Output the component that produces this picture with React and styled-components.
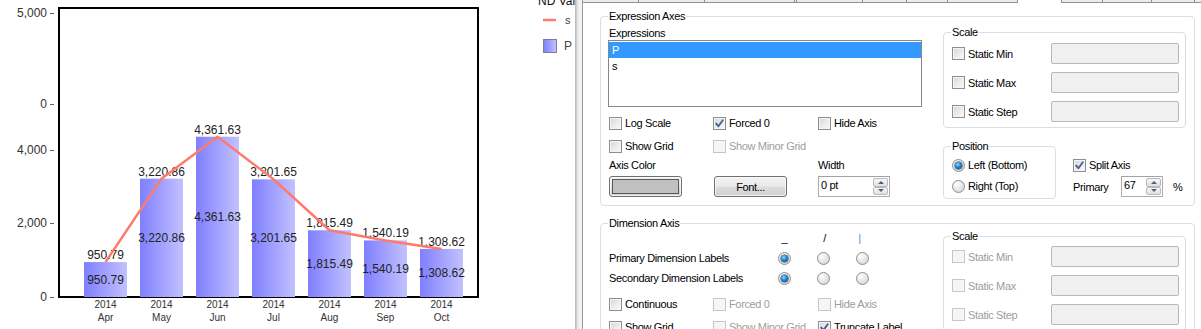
import React from 'react';
import styled, { createGlobalStyle } from 'styled-components';

const Global = createGlobalStyle`
  html, body { margin: 0; padding: 0; background: #fff; }
  body {
    width: 1201px; height: 329px; overflow: hidden;
    font-family: "Liberation Sans", Arial, sans-serif;
  }
`;

const Screen = styled.div`
  display: flex;
  width: 1201px;
  height: 329px;
  overflow: hidden;
  background: #fff;
`;

/* ---------------- Chart ---------------- */
const ChartPanel = styled.div`
  width: 575px;
  height: 329px;
  flex: none;
  overflow: hidden;
  background: #fff;
`;

const ChartSvg = styled.svg`
  display: block;
  font-family: "Liberation Sans", Arial, sans-serif;
`;

const DATA = [
  ['Apr', 950.79, '950.79'],
  ['May', 3220.86, '3,220.86'],
  ['Jun', 4361.63, '4,361.63'],
  ['Jul', 3201.65, '3,201.65'],
  ['Aug', 1815.49, '1,815.49'],
  ['Sep', 1540.19, '1,540.19'],
  ['Oct', 1308.62, '1,308.62'],
];

const BASE = 297;
const K = 147 / 4000;
const LINE = '#ff7a6a';

const YLABELS = [
  ['5,000', 13],
  ['0', 104],
  ['4,000', 150],
  ['2,000', 223],
  ['0', 297],
];

function Chart() {
  const pts = DATA.map(([, v], i) => [84 + 56 * i + 21.5, BASE - v * K]);
  return (
    <ChartSvg width="575" height="329" viewBox="0 0 575 329">
      <defs>
        <linearGradient id="barg" x1="0" y1="0" x2="1" y2="0">
          <stop offset="0" stopColor="#7f7fff" />
          <stop offset="1" stopColor="#c2c2ff" />
        </linearGradient>
      </defs>
      {YLABELS.map(([t, y], i) => (
        <g key={i}>
          <text x="47" y={y + 4} fontSize="12" fill="#333" textAnchor="end">{t}</text>
          <line x1="50" x2="54" y1={y + 0.5} y2={y + 0.5} stroke="#666" strokeWidth="1" />
        </g>
      ))}
      <rect x="59" y="8" width="419" height="289" fill="none" stroke="#000" strokeWidth="2" />
      {DATA.map(([m, v, t], i) => {
        const x = 84 + 56 * i;
        const h = v * K;
        const top = BASE - h;
        const cx = x + 21.5;
        return (
          <g key={m}>
            <rect x={x} y={top} width="43" height={h} fill="url(#barg)" />
            <text x={cx} y={top - 3} fontSize="12" fill="#222" textAnchor="middle">{t}</text>
            <text x={cx} y={top + h / 2 + 4} fontSize="12" fill="#222" textAnchor="middle">{t}</text>
            <text x={cx} y="308" fontSize="10" fill="#333" textAnchor="middle">2014</text>
            <text x={cx} y="321" fontSize="10" fill="#333" textAnchor="middle">{m}</text>
          </g>
        );
      })}
      <polyline
        points={pts.map((p) => p.join(',')).join(' ')}
        fill="none"
        stroke={LINE}
        strokeWidth="2.5"
        strokeLinejoin="round"
      />
      <text x="538" y="5" fontSize="12" fill="#111">ND Value</text>
      <line x1="543" x2="556" y1="20" y2="20" stroke={LINE} strokeWidth="2.5" />
      <text x="565" y="24" fontSize="11" fill="#444">s</text>
      <rect x="543.5" y="39.5" width="13" height="13" fill="url(#barg)" stroke="#7c7c9c" />
      <text x="564" y="50" fontSize="12" fill="#444">P</text>
    </ChartSvg>
  );
}

/* ---------------- Dialog ---------------- */
const WindowEdge = styled.div`
  width: 7px;
  flex: none;
  background: linear-gradient(
    to right,
    #b4b4b4 0px,
    #d8d8d8 2px,
    #eeeeee 3px,
    #f3f3f3 6px,
    #f3f3f3 7px
  );
`;

const Dialog = styled.div`
  flex: 1;
  min-width: 0;
  display: flex;
  flex-direction: column;
  background: #fff;
  border-left: 1px solid #9a9a9a;
  font-family: "Liberation Sans", Arial, sans-serif;
  font-size: 11px;
  letter-spacing: -0.35px;
  color: #000;
`;

const TabStrip = styled.div`
  display: flex;
  height: 3px;
  flex: none;
`;

const TabStub = styled.div`
  box-sizing: border-box;
  width: ${(p) => (p.$fill ? 'auto' : `${p.$w}px`)};
  flex: ${(p) => (p.$fill ? '1' : 'none')};
  height: 3px;
  background: ${(p) => (p.$sel ? '#fff' : '#ececec')};
  border-right: ${(p) => (p.$fill ? '0' : '1px solid #8e9196')};
  border-bottom: ${(p) => (p.$sel ? '0' : '1px solid #8e9196')};
`;

const TABS = [
  { w: 56 }, { w: 66 }, { w: 90 }, { w: 2 }, { w: 66 }, { w: 44 }, { w: 41 },
  { w: 70 }, { w: 44, sel: true }, { w: 41 }, { w: 49 }, { w: 43 }, { fill: true },
];

const Page = styled.div`
  padding: 7px 6px 0 17px;
  display: flex;
  flex-direction: column;
`;

const Group = styled.fieldset`
  margin: ${(p) => p.$mt || 0}px 0 0 0;
  padding: 0 ${(p) => p.$pr ?? 8}px ${(p) => p.$pb ?? 5}px 8px;
  border: 1px solid #d5dfe5;
  border-radius: 4px;
  min-width: 0;
  width: ${(p) => (p.$w ? `${p.$w}px` : 'auto')};
  box-sizing: border-box;
  flex: none;
`;

const GroupTitle = styled.legend`
  padding: 0 1px;
  margin-left: -1px;
  line-height: 13px;
  font-size: 11px;
`;

const GroupBody = styled.div`
  display: flex;
  gap: 21px;
`;

const LeftCol = styled.div`
  width: 313px;
  flex: none;
  display: flex;
  flex-direction: column;
`;

const RightCol = styled.div`
  width: 243px;
  flex: none;
  display: flex;
  flex-direction: column;
  padding-top: ${(p) => p.$pt || 0}px;
`;

const FieldLabel = styled.div`
  line-height: 13px;
  margin-top: ${(p) => p.$mt || 0}px;
`;

const ListBox = styled.div`
  margin: 0 0 0 -1px;
  width: 314px;
  height: 67px;
  box-sizing: border-box;
  border: 1px solid #828790;
  padding-top: 1px;
`;

const ListItem = styled.div`
  height: 16px;
  line-height: 16px;
  padding-left: 3px;
  background: ${(p) => (p.$selected ? '#3399ff' : 'transparent')};
  color: ${(p) => (p.$selected ? '#fff' : '#000')};
`;

const Row3 = styled.div`
  display: grid;
  grid-template-columns: 104px 105px 1fr;
  align-items: center;
  height: ${(p) => p.$h || 16}px;
  margin-top: ${(p) => p.$mt || 0}px;
`;

const CheckLabel = styled.label`
  display: flex;
  align-items: center;
  gap: 3px;
  white-space: nowrap;
  height: 16px;
  color: ${(p) => (p.$disabled ? '#9d9d9d' : '#000')};
`;

const Box = styled.span`
  width: 13px;
  height: 13px;
  flex: none;
  box-sizing: border-box;
  border: 1px solid ${(p) => (p.$disabled ? '#c6c6c6' : '#8e8f8f')};
  background: ${(p) =>
    p.$disabled ? '#f5f5f5' : 'linear-gradient(135deg, #d6d6d6 0%, #eeeeee 60%, #fbfbfb 100%)'};
  box-shadow: inset 0 0 0 1px ${(p) => (p.$disabled ? '#f7f7f7' : '#f4f4f4')};
  display: flex;
  align-items: center;
  justify-content: center;
`;

function Check({ label, checked, disabled }) {
  return (
    <CheckLabel $disabled={disabled}>
      <Box $disabled={disabled}>
        {checked && (
          <svg width="11" height="11" viewBox="0 0 11 11">
            <path
              d="M2.2 5.6 L4.4 8.2 L8.8 2.2"
              fill="none"
              stroke={disabled ? '#a8a8a8' : '#4b5f9a'}
              strokeWidth="1.9"
              strokeLinecap="round"
              strokeLinejoin="round"
            />
          </svg>
        )}
      </Box>
      {label}
    </CheckLabel>
  );
}

const RadioDot = styled.span`
  width: 13px;
  height: 13px;
  flex: none;
  box-sizing: border-box;
  border-radius: 50%;
  border: 1px solid #8e8f8f;
  background: radial-gradient(circle at 35% 30%, #ffffff 0%, #e8e8e8 45%, #cfcfcf 100%);
  display: flex;
  align-items: center;
  justify-content: center;
  &::after {
    content: '';
    display: ${(p) => (p.$on ? 'block' : 'none')};
    width: 7px;
    height: 7px;
    border-radius: 50%;
    background: radial-gradient(circle at 40% 35%, #8fd6ff 0%, #1f86cf 45%, #0c3c68 100%);
    box-shadow: 0 0 0 0.5px #0d3456;
  }
`;

const RadioLabel = styled.label`
  display: flex;
  align-items: center;
  gap: 3px;
  height: 16px;
  white-space: nowrap;
`;

function Radio({ label, on }) {
  return (
    <RadioLabel>
      <RadioDot $on={on} />
      {label}
    </RadioLabel>
  );
}

const ButtonFace = styled.button`
  width: 73px;
  height: 21px;
  box-sizing: border-box;
  margin: 0 0 0 ${(p) => p.$ml || 0}px;
  padding: 2px;
  border: 1px solid #707070;
  border-radius: 3px;
  background: linear-gradient(#f2f2f2 0%, #ebebeb 48%, #dddddd 52%, #cfcfcf 100%);
  box-shadow: inset 0 0 0 1px rgba(255, 255, 255, 0.7);
  font: inherit;
  letter-spacing: inherit;
  color: #000;
  display: flex;
  align-items: center;
  justify-content: center;
`;

const Swatch = styled.span`
  display: block;
  width: 100%;
  height: 100%;
  box-sizing: border-box;
  border: 1px solid #5a5a5a;
  background: #c0c0c0;
`;

const Spinner = styled.div`
  width: ${(p) => p.$w}px;
  height: 21px;
  box-sizing: border-box;
  border: 1px solid #abadb3;
  border-top-color: #a0a3aa;
  background: #fff;
  display: flex;
`;

const SpinText = styled.span`
  flex: 1;
  padding: 2px 0 0 2px;
  line-height: 13px;
`;

const SpinButtons = styled.div`
  width: 16px;
  display: flex;
  flex-direction: column;
  gap: 0;
  padding: 1px 1px 1px 0;
  box-sizing: border-box;
`;

const SpinButton = styled.span`
  flex: 1;
  box-sizing: border-box;
  border: 1px solid #b9b9b9;
  border-radius: 2px;
  background: linear-gradient(#f6f6f6, #e0e0e0);
  display: flex;
  align-items: center;
  justify-content: center;
  &::after {
    content: '';
    width: 0;
    height: 0;
    border-left: 3px solid transparent;
    border-right: 3px solid transparent;
    ${(p) => (p.$up ? 'border-bottom: 3px solid #4e5f82;' : 'border-top: 3px solid #4e5f82;')}
  }
`;

function Spin({ value, w }) {
  return (
    <Spinner $w={w}>
      <SpinText>{value}</SpinText>
      <SpinButtons>
        <SpinButton $up />
        <SpinButton />
      </SpinButtons>
    </Spinner>
  );
}

const ScaleRows = styled.div`
  display: flex;
  flex-direction: column;
  gap: 8px;
  padding-top: ${(p) => p.$pt || 4}px;
`;

const ScaleRow = styled.div`
  display: flex;
  align-items: center;
  justify-content: space-between;
  height: 21px;
`;

const ValueBox = styled.div`
  width: 128px;
  height: 21px;
  box-sizing: border-box;
  border: 1px solid #b8b8b8;
  border-radius: 2px;
  background: #f0f0f0;
`;

function ScaleGroup({ disabled, mt, pt }) {
  return (
    <Group $mt={mt} $pr={6} $pb={5}>
      <GroupTitle>Scale</GroupTitle>
      <ScaleRows $pt={pt}>
        {['Static Min', 'Static Max', 'Static Step'].map((l) => (
          <ScaleRow key={l}>
            <Check label={l} disabled={disabled} />
            <ValueBox />
          </ScaleRow>
        ))}
      </ScaleRows>
    </Group>
  );
}

const LowerRight = styled.div`
  display: flex;
  margin-top: 12px;
`;

const RadioStack = styled.div`
  display: flex;
  flex-direction: column;
  gap: 5px;
  padding-top: 4px;
`;

const SplitCol = styled.div`
  margin-left: 17px;
  padding-top: 17px;
  display: flex;
  flex-direction: column;
`;

const PrimaryRow = styled.div`
  display: flex;
  align-items: center;
  margin-top: 3px;
  height: 21px;
`;

const PrimaryLabel = styled.span`
  width: 48px;
`;

const Percent = styled.span`
  margin-left: 10px;
`;

const DimGrid = styled.div`
  display: grid;
  grid-template-columns: 169px 39px 39px 39px;
  align-items: center;
  height: ${(p) => p.$h || 16}px;
  margin-top: ${(p) => p.$mt || 0}px;
`;

const Glyph = styled.span`
  width: 13px;
  text-align: center;
  line-height: 13px;
  transform: translateX(${(p) => p.$dx || 0}px);
  color: ${(p) => p.$c || '#000'};
`;

export default function App() {
  return (
    <>
      <Global />
      <Screen>
        <ChartPanel>
          <Chart />
        </ChartPanel>
        <WindowEdge />
        <Dialog>
          <TabStrip>
            {TABS.map((t, i) => (
              <TabStub key={i} $w={t.w} $sel={t.sel} $fill={t.fill} />
            ))}
          </TabStrip>
          <Page>
            <Group $pb={6}>
              <GroupTitle>Expression Axes</GroupTitle>
              <GroupBody>
                <LeftCol>
                  <FieldLabel $mt={4}>Expressions</FieldLabel>
                  <ListBox>
                    <ListItem $selected>P</ListItem>
                    <ListItem>s</ListItem>
                  </ListBox>
                  <Row3 $mt={8}>
                    <Check label="Log Scale" />
                    <Check label="Forced 0" checked />
                    <Check label="Hide Axis" />
                  </Row3>
                  <Row3 $mt={7}>
                    <Check label="Show Grid" />
                    <Check label="Show Minor Grid" disabled />
                    <span />
                  </Row3>
                  <Row3 $mt={5} $h={13}>
                    <FieldLabel>Axis Color</FieldLabel>
                    <span />
                    <FieldLabel>Width</FieldLabel>
                  </Row3>
                  <Row3 $mt={4} $h={21}>
                    <ButtonFace type="button">
                      <Swatch />
                    </ButtonFace>
                    <ButtonFace type="button" $ml={1}>Font...</ButtonFace>
                    <Spin value="0 pt" w={72} />
                  </Row3>
                </LeftCol>
                <RightCol $pt={3}>
                  <ScaleGroup pt={4} />
                  <LowerRight>
                    <Group $w={113} $pb={4}>
                      <GroupTitle>Position</GroupTitle>
                      <RadioStack>
                        <Radio label="Left (Bottom)" on />
                        <Radio label="Right (Top)" />
                      </RadioStack>
                    </Group>
                    <SplitCol>
                      <Check label="Split Axis" checked />
                      <PrimaryRow>
                        <PrimaryLabel>Primary</PrimaryLabel>
                        <Spin value="67" w={42} />
                        <Percent>%</Percent>
                      </PrimaryRow>
                    </SplitCol>
                  </LowerRight>
                </RightCol>
              </GroupBody>
            </Group>

            <Group $mt={11} $pb={8}>
              <GroupTitle>Dimension Axis</GroupTitle>
              <GroupBody>
                <LeftCol>
                  <DimGrid $mt={2} $h={13}>
                    <span />
                    <Glyph>_</Glyph>
                    <Glyph $dx={1}>/</Glyph>
                    <Glyph $dx={-3} $c="#4a90d9">|</Glyph>
                  </DimGrid>
                  <DimGrid $mt={5}>
                    <span>Primary Dimension Labels</span>
                    <RadioDot $on />
                    <RadioDot />
                    <RadioDot />
                  </DimGrid>
                  <DimGrid $mt={4}>
                    <span>Secondary Dimension Labels</span>
                    <RadioDot $on />
                    <RadioDot />
                    <RadioDot />
                  </DimGrid>
                  <Row3 $mt={10}>
                    <Check label="Continuous" />
                    <Check label="Forced 0" disabled />
                    <Check label="Hide Axis" disabled />
                  </Row3>
                  <Row3 $mt={7}>
                    <Check label="Show Grid" />
                    <Check label="Show Minor Grid" disabled />
                    <Check label="Truncate Label" checked />
                  </Row3>
                </LeftCol>
                <RightCol $pt={0}>
                  <ScaleGroup disabled pt={3} />
                </RightCol>
              </GroupBody>
            </Group>
          </Page>
        </Dialog>
      </Screen>
    </>
  );
}
